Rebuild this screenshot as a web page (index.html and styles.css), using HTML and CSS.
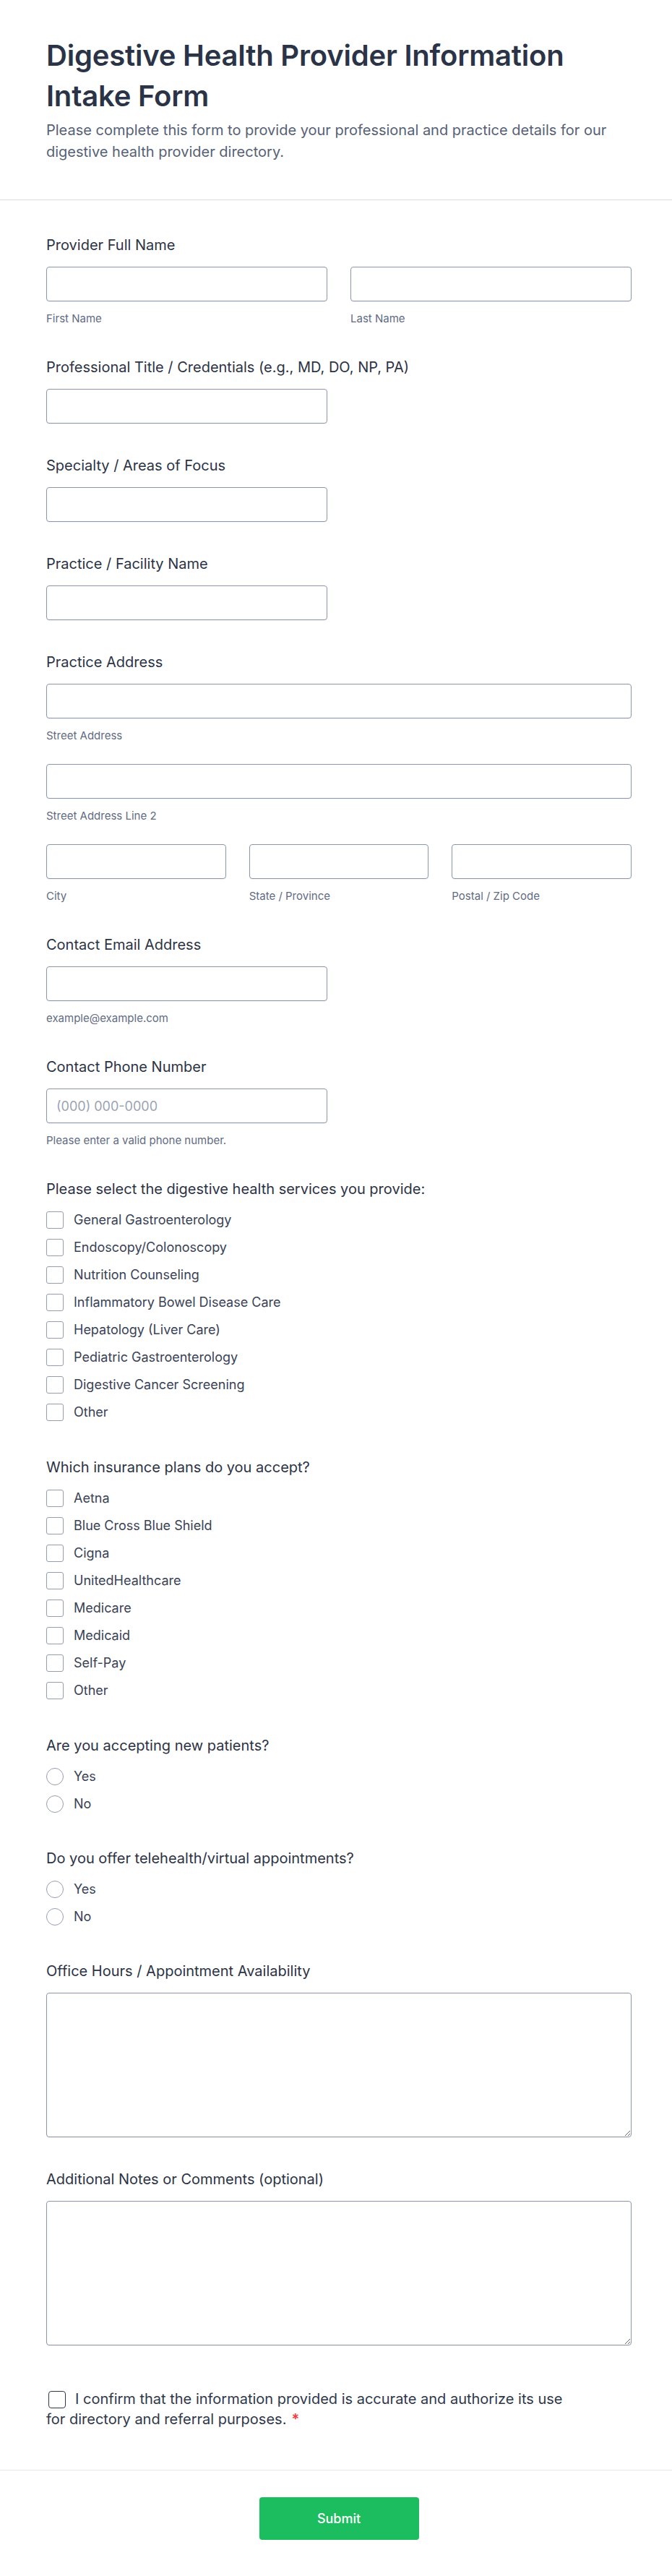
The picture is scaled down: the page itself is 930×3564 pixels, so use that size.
FILE: index.html
```html
<!DOCTYPE html>
<html lang="en">
<head>
<meta charset="utf-8">
<title>Digestive Health Provider Information Intake Form</title>
<link rel="stylesheet" href="styles.css">
</head>
<body>
<div class="page">
  <header class="form-header">
    <h1 class="form-title">Digestive Health Provider Information Intake Form</h1>
    <p class="form-desc">Please complete this form to provide your professional and practice details for our digestive health provider directory.</p>
  </header>

  <form class="form-body">
    <div class="field">
      <div class="field-label">Provider Full Name</div>
      <div class="grid-2">
        <div class="sub">
          <input class="text-input" type="text" aria-label="First Name">
          <span class="sublabel">First Name</span>
        </div>
        <div class="sub">
          <input class="text-input" type="text" aria-label="Last Name">
          <span class="sublabel">Last Name</span>
        </div>
      </div>
    </div>

    <div class="field">
      <div class="field-label">Professional Title / Credentials (e.g., MD, DO, NP, PA)</div>
      <div class="grid-2">
        <input class="text-input" type="text">
      </div>
    </div>

    <div class="field">
      <div class="field-label">Specialty / Areas of Focus</div>
      <div class="grid-2">
        <input class="text-input" type="text">
      </div>
    </div>

    <div class="field">
      <div class="field-label">Practice / Facility Name</div>
      <div class="grid-2">
        <input class="text-input" type="text">
      </div>
    </div>

    <div class="field">
      <div class="field-label">Practice Address</div>
      <div class="sub addr-row">
        <input class="text-input" type="text">
        <span class="sublabel">Street Address</span>
      </div>
      <div class="sub addr-row">
        <input class="text-input" type="text">
        <span class="sublabel">Street Address Line 2</span>
      </div>
      <div class="grid-3">
        <div class="sub">
          <input class="text-input" type="text">
          <span class="sublabel">City</span>
        </div>
        <div class="sub">
          <input class="text-input" type="text">
          <span class="sublabel">State / Province</span>
        </div>
        <div class="sub">
          <input class="text-input" type="text">
          <span class="sublabel">Postal / Zip Code</span>
        </div>
      </div>
    </div>

    <div class="field">
      <div class="field-label">Contact Email Address</div>
      <div class="grid-2">
        <div class="sub">
          <input class="text-input" type="email">
          <span class="sublabel">example@example.com</span>
        </div>
      </div>
    </div>

    <div class="field">
      <div class="field-label">Contact Phone Number</div>
      <div class="grid-2">
        <div class="sub">
          <input class="text-input" type="tel" placeholder="(000) 000-0000">
          <span class="sublabel">Please enter a valid phone number.</span>
        </div>
      </div>
    </div>

    <div class="field">
      <div class="field-label">Please select the digestive health services you provide:</div>
      <div class="options options-check">
        <label class="option"><input class="box" type="checkbox"><span>General Gastroenterology</span></label>
        <label class="option"><input class="box" type="checkbox"><span>Endoscopy/Colonoscopy</span></label>
        <label class="option"><input class="box" type="checkbox"><span>Nutrition Counseling</span></label>
        <label class="option"><input class="box" type="checkbox"><span>Inflammatory Bowel Disease Care</span></label>
        <label class="option"><input class="box" type="checkbox"><span>Hepatology (Liver Care)</span></label>
        <label class="option"><input class="box" type="checkbox"><span>Pediatric Gastroenterology</span></label>
        <label class="option"><input class="box" type="checkbox"><span>Digestive Cancer Screening</span></label>
        <label class="option"><input class="box" type="checkbox"><span>Other</span></label>
      </div>
    </div>

    <div class="field">
      <div class="field-label">Which insurance plans do you accept?</div>
      <div class="options options-check">
        <label class="option"><input class="box" type="checkbox"><span>Aetna</span></label>
        <label class="option"><input class="box" type="checkbox"><span>Blue Cross Blue Shield</span></label>
        <label class="option"><input class="box" type="checkbox"><span>Cigna</span></label>
        <label class="option"><input class="box" type="checkbox"><span>UnitedHealthcare</span></label>
        <label class="option"><input class="box" type="checkbox"><span>Medicare</span></label>
        <label class="option"><input class="box" type="checkbox"><span>Medicaid</span></label>
        <label class="option"><input class="box" type="checkbox"><span>Self-Pay</span></label>
        <label class="option"><input class="box" type="checkbox"><span>Other</span></label>
      </div>
    </div>

    <div class="field">
      <div class="field-label">Are you accepting new patients?</div>
      <div class="options options-radio">
        <label class="option"><input class="circle" type="radio" name="newpatients"><span>Yes</span></label>
        <label class="option"><input class="circle" type="radio" name="newpatients"><span>No</span></label>
      </div>
    </div>

    <div class="field">
      <div class="field-label">Do you offer telehealth/virtual appointments?</div>
      <div class="options options-radio">
        <label class="option"><input class="circle" type="radio" name="telehealth"><span>Yes</span></label>
        <label class="option"><input class="circle" type="radio" name="telehealth"><span>No</span></label>
      </div>
    </div>

    <div class="field">
      <div class="field-label">Office Hours / Appointment Availability</div>
      <textarea class="text-area"></textarea>
    </div>

    <div class="field">
      <div class="field-label">Additional Notes or Comments (optional)</div>
      <textarea class="text-area"></textarea>
    </div>

    <div class="field confirm">
      <label class="confirm-text"><input class="confirm-box" type="checkbox">I confirm that the information provided is accurate and authorize its use for directory and referral purposes.<span class="req">*</span></label>
    </div>
  </form>

  <footer class="form-footer">
    <button class="submit-btn" type="button">Submit</button>
  </footer>
</div>
</body>
</html>
```

FILE: styles.css
```css
* {
  box-sizing: border-box;
}

html, body {
  margin: 0;
  padding: 0;
  background: #ffffff;
}

body {
  font-family: Inter, "Noto Sans", "Liberation Sans", sans-serif;
  color: #2c3345;
}

.page {
  width: 930px;
}

.form-header {
  padding: 49px 56px 51px 64px;
  border-bottom: 1px solid #d6d9e0;
}

.form-title {
  margin: 0;
  font-size: 40px;
  line-height: 56px;
  font-weight: 600;
  color: #2b3447;
  letter-spacing: -0.2px;
}

.form-desc {
  margin: 4px 0 0;
  font-size: 20px;
  line-height: 30px;
  color: #566176;
}

.form-body {
  padding: 48px 56px 0 64px;
}

.field {
  margin-bottom: 44px;
}

.field-label {
  display: block;
  font-size: 20px;
  line-height: 28px;
  font-weight: 400;
  color: #2c3345;
  margin-bottom: 16px;
}

.grid-2 {
  display: grid;
  grid-template-columns: 1fr 1fr;
  column-gap: 32px;
}

.grid-3 {
  display: grid;
  grid-template-columns: 1fr 1fr 1fr;
  column-gap: 32px;
}

.sub {
  display: flex;
  flex-direction: column;
}

.addr-row {
  margin-bottom: 30px;
}

.text-input {
  display: block;
  width: 100%;
  height: 48px;
  margin: 0;
  padding: 0 13px;
  border: 1px solid #8f96aa;
  border-radius: 4px;
  background: #ffffff;
  font-family: inherit;
  font-size: 18px;
  color: #2c3345;
  box-shadow: 0 1px 1px rgba(40, 50, 80, 0.06);
}

.text-input::placeholder {
  color: #9aa3b3;
}

.sublabel {
  display: block;
  margin-top: 15px;
  font-size: 15px;
  line-height: 18px;
  color: #5f6b83;
}

.options {
  display: flex;
  flex-direction: column;
  gap: 10px;
  margin-top: -1px;
}

.options-check {
  padding-bottom: 4px;
}

.options-radio {
  padding-bottom: 3px;
}

.option {
  display: flex;
  align-items: center;
  gap: 14px;
  height: 28px;
  font-size: 18px;
  line-height: 28px;
  color: #3a4255;
}

.box,
.circle {
  appearance: none;
  -webkit-appearance: none;
  flex: none;
  width: 24px;
  height: 24px;
  margin: 0;
  border: 1px solid #979db1;
  background: #ffffff;
}

.box {
  border-radius: 3px;
}

.circle {
  border-radius: 50%;
}

.text-area {
  display: block;
  width: 100%;
  height: 200px;
  margin: 0;
  padding: 10px 13px;
  border: 1px solid #8f96aa;
  border-radius: 4px;
  font-family: inherit;
  font-size: 18px;
  resize: vertical;
  box-shadow: 0 1px 1px rgba(40, 50, 80, 0.06);
}

.confirm {
  padding-top: 16px;
  padding-bottom: 12px;
  margin-bottom: 0;
}

.confirm-text {
  display: block;
  max-width: 730px;
  font-size: 20px;
  line-height: 28px;
  color: #2f384b;
}

.confirm-box {
  appearance: none;
  -webkit-appearance: none;
  display: inline-block;
  width: 24px;
  height: 24px;
  margin: 0 13px 0 3px;
  border: 1.5px solid #2f384b;
  border-radius: 4px;
  vertical-align: -6px;
  background: #ffffff;
}

.req {
  margin-left: 7px;
  color: #f23a3a;
  font-weight: 600;
}

.form-footer {
  margin-top: 44px;
  border-top: 1px solid #e3e6ec;
  padding: 37px 56px 50px 64px;
  display: flex;
  justify-content: center;
}

.submit-btn {
  width: 221px;
  height: 59px;
  border: none;
  border-radius: 4px;
  background: #1bbd5e;
  color: #ffffff;
  font-family: inherit;
  font-size: 18px;
  font-weight: 500;
}
```
